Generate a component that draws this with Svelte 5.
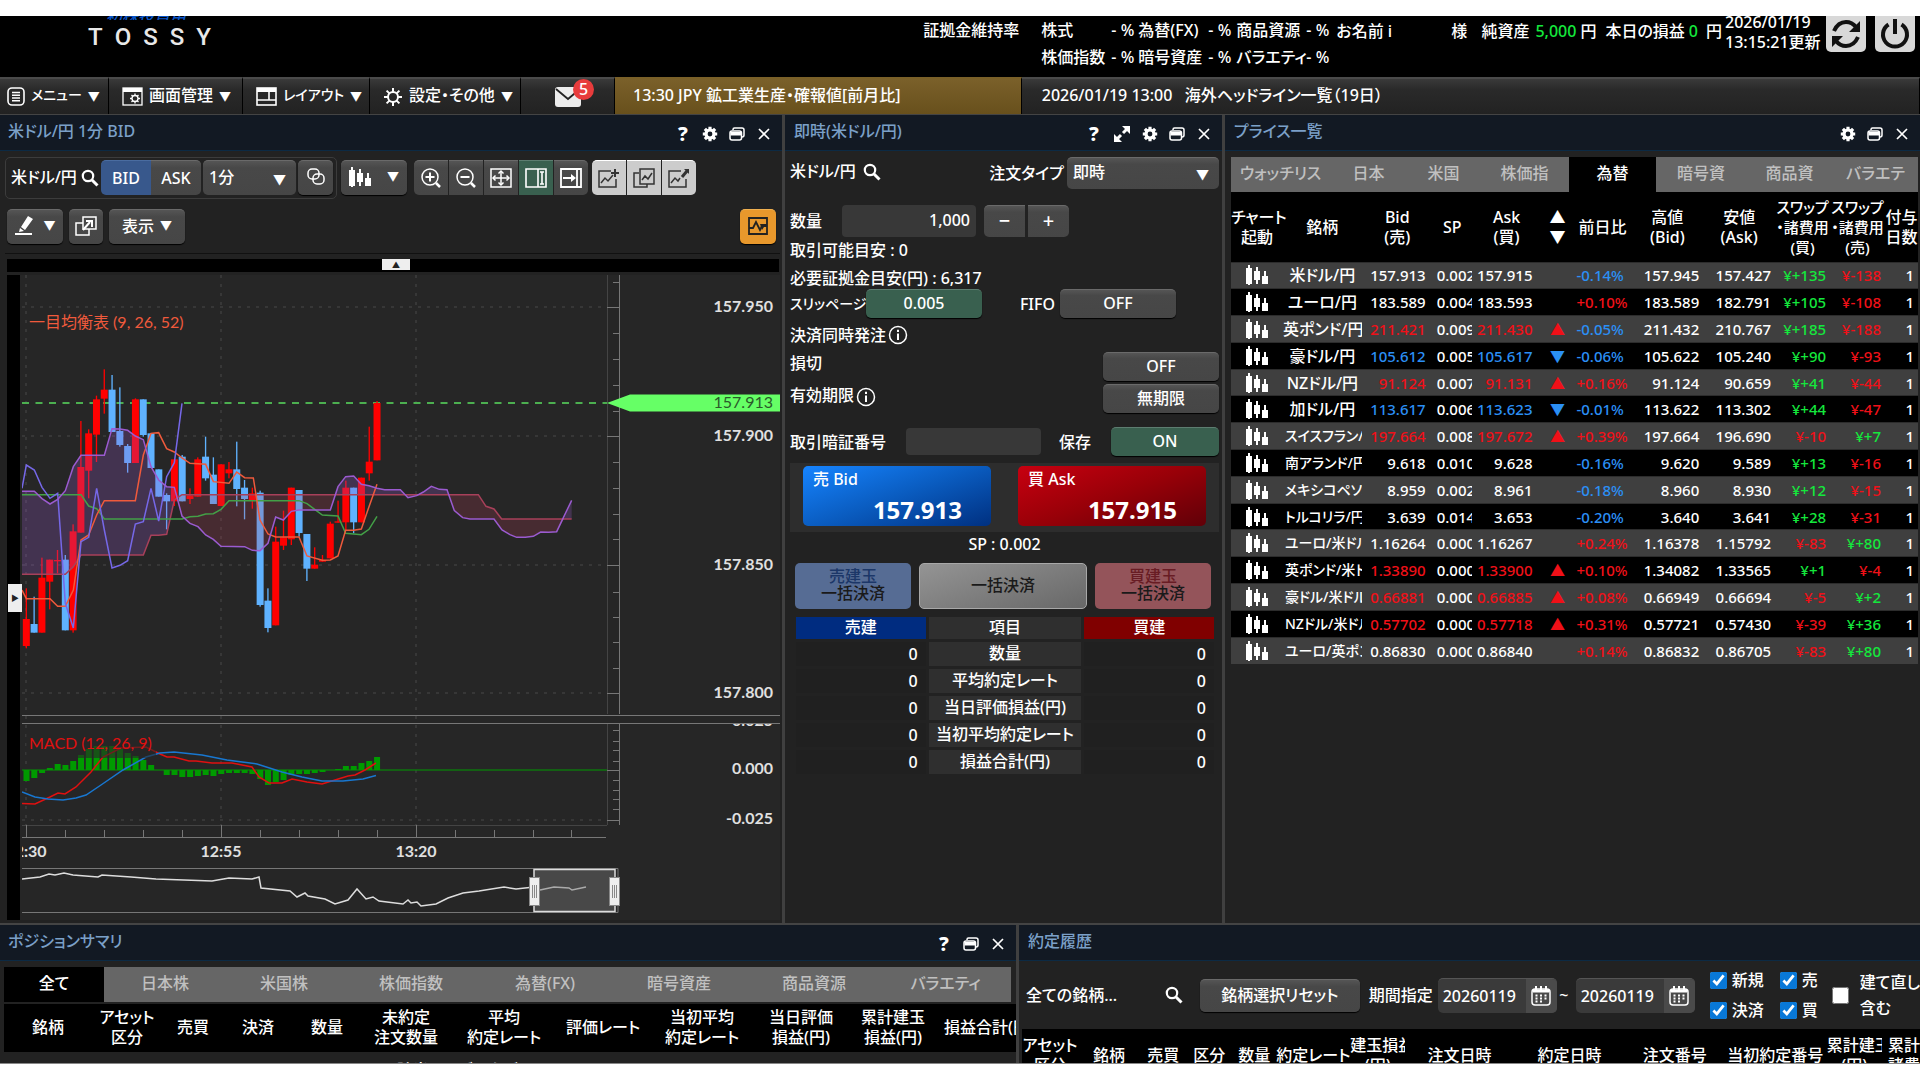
<script>
  const rates = [
    ['株式', '為替(FX)', '商品資源'],
    ['株価指数', '暗号資産', 'バラエティ']
  ];

  const menus = [
    { icon: 'list', label: 'メニュー', width: 109, kana: true },
    { icon: 'screen', label: '画面管理', width: 134 },
    { icon: 'layout', label: 'レイアウト', width: 127, kana: true },
    { icon: 'gearline', label: '設定・その他', width: 151 }
  ];

  const zoomTools = ['zoomin', 'zoomout', 'fit', 'axis', 'shift'];
  const chartTools = ['chartadd', 'chartcopy', 'chartedit'];

  // [color, high, open/close top, open/close bottom, low] in thirds of a pixel
  const candles = [
    ['r', 985, 1077, 1158, 1165], ['b', 1010, 1092, 1118, 1118], ['r', 893, 953, 1118, 1118],
    ['r', 899, 899, 965, 1048], ['r', 870, 900, 904, 940], ['b', 885, 899, 1111, 1111],
    ['r', 793, 814, 1111, 1118], ['r', 483, 621, 818, 818], ['r', 508, 520, 632, 715],
    ['r', 407, 418, 524, 606], ['r', 328, 389, 416, 461], ['b', 345, 389, 516, 516],
    ['b', 382, 513, 555, 560], ['b', 552, 558, 609, 638], ['r', 415, 418, 609, 609],
    ['b', 418, 418, 525, 530], ['b', 520, 520, 624, 624], ['b', 628, 628, 710, 710],
    ['b', 700, 705, 724, 808], ['r', 598, 598, 724, 738], ['b', 585, 590, 724, 724],
    ['r', 685, 706, 717, 732], ['r', 592, 598, 710, 710], ['b', 530, 590, 655, 662],
    ['b', 592, 644, 732, 732], ['r', 613, 613, 738, 738], ['r', 606, 628, 640, 655],
    ['b', 545, 628, 687, 739], ['b', 660, 683, 717, 778], ['r', 683, 700, 720, 746],
    ['b', 692, 698, 1035, 1040], ['b', 985, 1022, 1104, 1117], ['r', 800, 845, 1096, 1096],
    ['r', 752, 832, 857, 870], ['r', 683, 683, 838, 855], ['b', 690, 690, 819, 830],
    ['b', 822, 822, 926, 963], ['r', 862, 914, 926, 926], ['r', 885, 900, 905, 905],
    ['r', 785, 791, 895, 895], ['r', 722, 784, 788, 788], ['r', 662, 683, 787, 810],
    ['b', 683, 683, 787, 820], ['r', 653, 653, 787, 787], ['r', 500, 605, 640, 662],
    ['r', 423, 429, 601, 601]
  ];

  const spanA1 = '66,694 103,694 126,716 150,732 173,718 196,692 220,620 243,586 313,586 336,506 360,507 383,511 406,528 430,539 453,620 476,660 500,680 523,682';
  const spanA2 = '546,768 570,790 594,800 617,825 640,838 663,859 734,860 757,871 780,872 804,850 827,771 850,780 874,754 897,750 991,750';
  const spanA3 = '1014,680 1037,650 1061,648 1084,673 1107,677 1131,685 1154,689 1201,689 1224,713 1250,707 1270,696 1294,679 1318,688 1341,689';
  const spanA4 = '1363,752 1388,773 1410,777 1482,777 1506,810 1530,824 1550,832 1576,832 1600,829 1622,816 1646,817 1670,815';
  const spanA = [spanA1, spanA2, spanA3, spanA4, '1715,721'].join(' ');
  const spanB = '66,943 196,943 220,920 243,885 430,885 453,826 476,826 500,823 523,720 546,704 1435,704 1458,739 1482,747 1505,777 1715,777';
  const conversion = '66,990 79,1016 150,1016 173,1039 196,1039 220,990 243,840 266,825 290,765 313,722 406,722 430,585 453,520 476,518 500,566 523,576 546,594 570,610 617,613 640,665 687,670 710,636 734,653 760,654 780,780 804,822 827,831 897,831 921,888 967,901 991,900 1014,888 1037,811 1061,811 1084,807 1107,740 1131,673';
  const baseLine = '66,704 243,704 266,738 290,746 313,777 546,777 570,770 594,769 617,762 640,761 663,748 687,722 897,722 921,731 944,748 967,765 1014,768 1037,820 1084,824 1107,808 1131,769';
  const lagging = '66,685 79,615 103,630 126,682 150,715 173,700 196,1030 220,1104 243,845 266,832 290,685 313,810 336,924 360,916 383,902 406,792 430,785 453,685 476,783 500,650 523,608 546,430';

  const priceLabels = [
    ['157.950', 307], ['157.900', 436], ['157.850', 565], ['157.800', 693]
  ];
  const minorTicks = [282, 333, 359, 385, 411, 462, 488, 514, 539, 592, 617, 642, 668];
  const macdTicks = [730, 741, 750, 761, 780, 790, 799, 809];
  const timeTicks = [65, 104, 143, 182, 260, 299, 338, 377, 455, 494, 533, 571];

  // MACD histogram, pixels above (+) or below (-) zero
  const histogram = [
    -11, -8, -3, 2, 6, 5, 9, 15, 21, 24, 24, 24, 21, 17, 14, 10, 5, 0, -5, -5, -7, -7, -6,
    -5, -6, -4, -3, -3, -3, -4, -9, -15, -12, -10, -5, -4, -4, -3, -2, 0, 1, 4, 4, 7, 9, 13
  ];

  const summaryRows = ['数量', '平均約定レート', '当日評価損益(円)', '当初平均約定レート', '損益合計(円)'];

  const priceTabs = [
    ['ウォッチリス', 99], ['日本', 77], ['米国', 73], ['株価指', 89],
    ['為替', 87], ['暗号資', 90], ['商品資', 87], ['バラエテ', 85]
  ];
  const priceCols = [52, 79, 71, 39, 70, 32, 58, 72, 72, 55, 55, 33];
  const priceHeads = [
    'チャート\n起動', '銘柄', 'Bid\n(売)', 'SP', 'Ask\n(買)', '▲\n▼', '前日比',
    '高値\n(Bid)', '安値\n(Ask)', 'スワップ\n・諸費用\n(買)', 'スワップ\n・諸費用\n(売)', '付与\n日数'
  ];
  const prices = [
    ['米ドル/円', '157.913', '0.002', '157.915', '', '-0.14%', '157.945', '157.427', '+135', '-138'],
    ['ユーロ/円', '183.589', '0.004', '183.593', '', '+0.10%', '183.589', '182.791', '+105', '-108'],
    ['英ポンド/円', '211.421', '0.009', '211.430', 'up', '-0.05%', '211.432', '210.767', '+185', '-188'],
    ['豪ドル/円', '105.612', '0.005', '105.617', 'down', '-0.06%', '105.622', '105.240', '+90', '-93'],
    ['NZドル/円', '91.124', '0.007', '91.131', 'up', '+0.16%', '91.124', '90.659', '+41', '-44'],
    ['加ドル/円', '113.617', '0.006', '113.623', 'down', '-0.01%', '113.622', '113.302', '+44', '-47'],
    ['スイスフラン/円', '197.664', '0.008', '197.672', 'up', '+0.39%', '197.664', '196.690', '-10', '+7'],
    ['南アランド/円', '9.618', '0.010', '9.628', '', '-0.16%', '9.620', '9.589', '+13', '-16'],
    ['メキシコペソ/円', '8.959', '0.002', '8.961', '', '-0.18%', '8.960', '8.930', '+12', '-15'],
    ['トルコリラ/円', '3.639', '0.014', '3.653', '', '-0.20%', '3.640', '3.641', '+28', '-31'],
    ['ユーロ/米ドル', '1.16264', '0.00003', '1.16267', '', '+0.24%', '1.16378', '1.15792', '-83', '+80'],
    ['英ポンド/米ドル', '1.33890', '0.00010', '1.33900', 'up', '+0.10%', '1.34082', '1.33565', '+1', '-4'],
    ['豪ドル/米ドル', '0.66881', '0.00004', '0.66885', 'up', '+0.08%', '0.66949', '0.66694', '-5', '+2'],
    ['NZドル/米ドル', '0.57702', '0.00016', '0.57718', 'up', '+0.31%', '0.57721', '0.57430', '-39', '+36'],
    ['ユーロ/英ポンド', '0.86830', '0.00010', '0.86840', '', '+0.14%', '0.86832', '0.86705', '-83', '+80']
  ];

  const positionTabs = [
    ['全て', 100], ['日本株', 122], ['米国株', 116], ['株価指数', 138],
    ['為替(FX)', 130], ['暗号資産', 138], ['商品資源', 132], ['バラエティ', 131]
  ];
  const positionCols = [
    ['銘柄', 88], ['アセット\n区分', 70], ['売買', 62], ['決済', 68], ['数量', 70],
    ['未約定\n注文数量', 88], ['平均\n約定レート', 108], ['評価レート', 90],
    ['当初平均\n約定レート', 108], ['当日評価\n損益(円)', 90], ['累計建玉\n損益(円)', 94], ['損益合計(円)', 98]
  ];
  const historyCols = [
    ['アセット\n区分', 56], ['銘柄', 62], ['売買', 46], ['区分', 46], ['数量', 44],
    ['約定レート', 74], ['建玉損益\n(円)', 55], ['注文日時', 108], ['約定日時', 112],
    ['注文番号', 98], ['当初約定番号', 103], ['累計建玉\n(円)', 55], ['累計諸\n諸費用', 60]
  ];

  let side = $state('BID');
  let quantity = $state('1,000');
  let pin = $state('');
  let priceTab = $state('為替');
  let positionTab = $state('全て');
  let from = $state('20260119');
  let to = $state('20260119');

  const sign = (v) => (v.startsWith('+') ? 'gain' : 'loss');
  const pct = (v) => (v.startsWith('+') ? 'up' : 'down');
</script>

{#snippet icon(name)}
  {#if name === 'gear' || name === 'gearline'}
    <svg class="ic" width={name === 'gear' ? 16 : 20} height={name === 'gear' ? 16 : 20} viewBox="0 0 20 20" fill="none" stroke="currentColor">
      <circle cx="10" cy="10" r="5" stroke-width={name === 'gear' ? 4 : 2} />
      <path d="M10 1v4M10 15v4M1 10h4M15 10h4M3.6 3.6l2.8 2.8M13.6 13.6l2.8 2.8M3.6 16.4l2.8-2.8M13.6 6.4l2.8-2.8" stroke-width={name === 'gear' ? 4 : 2} />
    </svg>
  {:else if name === 'help'}
    <span class="q">?</span>
  {:else if name === 'window'}
    <svg class="ic" width="16" height="14" viewBox="0 0 16 14" fill="none" stroke="currentColor" stroke-width="1.5">
      <path d="M4 3V2.5Q4 1 5.5 1H13Q15 1 15 3V8Q15 10 13 10" />
      <rect x="1" y="4" width="11.5" height="9" rx="2" />
      <path d="M1.5 5h10.500v3.5H1.5z" fill="currentColor" stroke="none" />
    </svg>
  {:else if name === 'close'}
    <svg class="ic" width="14" height="14" viewBox="0 0 14 14" stroke="currentColor" stroke-width="1.7"><path d="M2 2l10 10M12 2L2 12" /></svg>
  {:else if name === 'expand'}
    <svg class="ic" width="18" height="18" viewBox="0 0 18 18" fill="currentColor" stroke="currentColor">
      <path d="M9 1h8v8zM1 9v8h8z" stroke="none" /><path d="M14 4l-4 4M4 14l4-4" stroke-width="3" />
    </svg>
  {:else if name === 'search'}
    <svg class="ic" width="18" height="18" viewBox="0 0 18 18" fill="none" stroke="currentColor"><circle cx="7" cy="7" r="5.2" stroke-width="2.2" /><path d="M11 11l5.5 5.5" stroke-width="3" /></svg>
  {:else if name === 'list'}
    <svg class="ic" width="18" height="19" viewBox="0 0 18 19" fill="none" stroke="currentColor" stroke-width="1.6"><rect x="1" y="1" width="16" height="17" rx="4" /><path d="M5 5.5h8M5 8.2h8M5 11h8M5 13.7h8" /></svg>
  {:else if name === 'screen'}
    <svg class="ic" width="21" height="19" viewBox="0 0 21 19" fill="none" stroke="currentColor" stroke-width="1.3"><rect x="1" y="1" width="19" height="17" /><path d="M1 3h19" stroke-width="4" /><circle cx="13" cy="11.5" r="3" /><path d="M13 6.5v2M13 14.5v2M8 11.5h2M16 11.5h2M9.5 8l1.5 1.5M15 13.5l1.5 1.5M9.5 15l1.5-1.5M15 9.5l1.5-1.5" /></svg>
  {:else if name === 'layout'}
    <svg class="ic" width="21" height="19" viewBox="0 0 21 19" fill="none" stroke="currentColor" stroke-width="1.6"><rect x="1" y="1" width="19" height="17" /><path d="M1 3h19" stroke-width="4" /><path d="M13 4v9M1 13h19" /></svg>
  {:else if name === 'mail'}
    <svg class="ic" width="26" height="20" viewBox="0 0 26 20"><rect width="26" height="20" rx="3" fill="#ececec" /><path d="M1 2l12 10L25 2" fill="none" stroke="#222" stroke-width="1.8" /></svg>
  {:else if name === 'refresh'}
    <svg class="ic" width="32" height="30" viewBox="0 0 32 30" fill="none" stroke="#111" stroke-width="4"><path d="M4 12Q8 3 16 3Q22 3 26 8M28 18Q24 27 16 27Q10 27 6 22" /><path d="M30 2v11H19zM2 28V17h11z" fill="#111" stroke="none" /></svg>
  {:else if name === 'power'}
    <svg class="ic" width="30" height="30" viewBox="0 0 30 30" fill="none" stroke="#111" stroke-width="4"><path d="M8.5 5.5a12 12 0 1 0 13 0M15 0v15" /></svg>
  {:else if name === 'link'}
    <svg class="ic" width="20" height="18" viewBox="0 0 20 18" fill="none" stroke="currentColor" stroke-width="1.5"><rect x="2" y="1" width="11" height="10" rx="4" /><rect x="7" y="6" width="11" height="10" rx="4" /></svg>
  {:else if name === 'candles'}
    <svg class="ic" width="22" height="20" viewBox="0 0 22 20" fill="currentColor"><path d="M0 3h6v16H0zM2 0h2v20H2zM8 6h6v9H8zM10 2h2v17h-2zM16 11h6v8h-6zM18 6h2v13h-2z" /></svg>
  {:else if name === 'zoomin' || name === 'zoomout'}
    <svg class="ic" width="22" height="20" viewBox="0 0 22 20" fill="none" stroke="currentColor" stroke-width="1.5"><circle cx="10" cy="9" r="8" /><path d="M16 15l4 4" stroke-width="2.5" /><path d={name === 'zoomin' ? 'M5.5 9h9M10 4.5v9' : 'M5.5 9h9'} stroke-width="2" /></svg>
  {:else if name === 'fit'}
    <svg class="ic" width="22" height="20" viewBox="0 0 22 20" fill="none" stroke="currentColor" stroke-width="1.5"><path d="M1 1h20v18H1zM11 3v14M3 10h16" /><path d="M8.5 5.5L11 3l2.5 2.5M8.5 14.5L11 17l2.5-2.5M5.5 7.5L3 10l2.5 2.5M16.5 7.5L19 10l-2.5 2.5" /></svg>
  {:else if name === 'axis'}
    <svg class="ic" width="22" height="20" viewBox="0 0 22 20" fill="none" stroke="currentColor" stroke-width="1.6"><path d="M1 1h20v18H1zM13 1v18M15 4h4M15 16h4M17 4v12" /></svg>
  {:else if name === 'shift'}
    <svg class="ic" width="22" height="20" viewBox="0 0 22 20" fill="none" stroke="currentColor" stroke-width="1.8"><path d="M1 1h20v18H1zM17 1v18M3 10h10" /><path d="M11 6l5 4-5 4z" fill="currentColor" stroke="none" /></svg>
  {:else if name === 'chartadd'}
    <svg class="ic" width="22" height="20" viewBox="0 0 22 20" fill="none" stroke="currentColor" stroke-width="1.5"><path d="M13 3H1v16h17v-8M3 15l4-5 3 3 5-6" /><path d="M17 1v8M13 5h8" stroke-width="2" /></svg>
  {:else if name === 'chartcopy'}
    <svg class="ic" width="22" height="20" viewBox="0 0 22 20" fill="none" stroke="currentColor" stroke-width="1.5"><path d="M6 5H1v14h13v-3M7 1h14v15H7zM9 12l3-4 3 3 4-6" /></svg>
  {:else if name === 'chartedit'}
    <svg class="ic" width="22" height="20" viewBox="0 0 22 20" fill="none" stroke="currentColor" stroke-width="1.5"><path d="M13 3H1v16h17v-8M3 15l4-5 3 3 2-3" /><path d="M14 9l5-6" stroke-width="3" /><path d="M16 1h5v5z" fill="currentColor" stroke="none" /></svg>
  {:else if name === 'pencil'}
    <svg class="ic" width="20" height="19" viewBox="0 0 20 19" fill="currentColor"><path d="M14 0l5 3-8 11-4-3zM6 12l4 3-5 1zM1 17h17v2H1z" /></svg>
  {:else if name === 'popout'}
    <svg class="ic" width="22" height="20" viewBox="0 0 22 20" fill="none" stroke="currentColor" stroke-width="1.5"><path d="M8 1h13v12H8zM8 7H1v12h13v-6" /><path d="M8 14l7-8M11 5h6v6" stroke-width="2" /></svg>
  {:else if name === 'trend'}
    <svg class="ic" width="20" height="18" viewBox="0 0 20 18" fill="none" stroke="#222" stroke-width="1.8"><path d="M1 1h18v16H1zM1 11h4l3-6 4 8 2-4" /><path d="M12 7h7v3h-3l-2 3z" fill="#222" stroke="none" /></svg>
  {:else if name === 'info'}
    <svg class="ic" width="20" height="20" viewBox="0 0 20 20" fill="none" stroke="currentColor"><circle cx="10" cy="10" r="8.5" stroke-width="1.5" /><path d="M10 8.5v6.5M10 4.8v2.2" stroke-width="2" /></svg>
  {:else if name === 'calendar'}
    <svg class="ic" width="20" height="20" viewBox="0 0 20 20" fill="none" stroke="currentColor" stroke-width="1.5"><rect x="1" y="3" width="18" height="16" rx="3" /><path d="M2 5h16" stroke-width="3" /><path d="M5 0v4M10 0v4M15 0v4" stroke-width="2" /><path d="M4.5 9.5h11M4.5 12.5h11M4.5 15.5h9" stroke-width="2" stroke-dasharray="2 2.5" /></svg>
  {/if}
{/snippet}

{#snippet panelHead(title, icons)}
  <header class="panel-head">
    <h2>{title}</h2>
    <div class="panel-icons">
      {#each icons as name}
        <button type="button" aria-label={name}>{@render icon(name)}</button>
      {/each}
    </div>
  </header>
{/snippet}

<div class="app" lang="ja">
  <header class="top">
    <div class="logo">
      <span class="tag">初株投資用</span>
      <div class="brand">
        {#each 'TOSSY' as letter}<span>{letter}</span>{/each}
      </div>
    </div>
    <div class="account">
      <span class="margin-label">証拠金維持率</span>
      <div class="rates">
        {#each rates as row}
          {#each row as name}
            <span>{name}</span><span>- %</span>
          {/each}
        {/each}
      </div>
      <div class="stats">
        <span class="name">お名前 i</span>
        <span class="sama">様</span>
        <span class="net">純資産</span>
        <b class="gain">5,000</b>
        <span class="yen">円</span>
        <span>本日の損益</span>
        <b class="gain">0</b>
        <span class="yen2">円</span>
      </div>
      <div class="clock">2026/01/19<br />13:15:21更新</div>
      <div class="sys">
        <button type="button" aria-label="更新">{@render icon('refresh')}</button>
        <button type="button" aria-label="ログアウト">{@render icon('power')}</button>
      </div>
    </div>
  </header>

  <nav class="menu">
    {#each menus as m}
      <button type="button" style="width: {m.width}px">{@render icon(m.icon)}<span class:kana={m.kana}>{m.label}</span><i>▼</i></button>
    {/each}
    <button type="button" class="mail" aria-label="メール">{@render icon('mail')}<em>5</em></button>
    <a href="#news" class="news gold">13:30 JPY 鉱工業生産・確報値[前月比]</a>
    <a href="#headline" class="news">2026/01/19 13:00&nbsp;&nbsp; 海外ヘッドライン一覧（19日）</a>
  </nav>

  <main class="upper">
    <section class="panel">
      {@render panelHead('米ドル/円 1分 BID', ['help', 'gear', 'window', 'close'])}
      <div class="chart-wrap">
        <div class="tools">
          <div class="symbol">
            <span class="pair">米ドル/円</span>
            <button type="button" class="bare" aria-label="銘柄検索">{@render icon('search')}</button>
            <div class="seg sides">
              {#each ['BID', 'ASK'] as s}
                <button type="button" class:blue={side === s} onclick={() => (side = s)}>{s}</button>
              {/each}
            </div>
            <span class="pick foot"><select aria-label="足種"><option>1分</option></select></span>
            <button type="button" class="btn link" aria-label="連動">{@render icon('link')}</button>
          </div>
          <button type="button" class="btn style" aria-label="チャート種類">{@render icon('candles')}<i>▼</i></button>
          <div class="seg">
            {#each zoomTools as t}
              <button type="button" class:green={t === 'axis'} aria-label={t}>{@render icon(t)}</button>
            {/each}
          </div>
          <div class="seg light">
            {#each chartTools as t}
              <button type="button" aria-label={t}>{@render icon(t)}</button>
            {/each}
          </div>
        </div>
        <div class="tools second">
          <button type="button" class="btn draw" aria-label="描画">{@render icon('pencil')}<i>▼</i></button>
          <button type="button" class="btn pop" aria-label="別窓">{@render icon('popout')}</button>
          <button type="button" class="btn show">表示<i>▼</i></button>
          <button type="button" class="btn orange" aria-label="テクニカル">{@render icon('trend')}</button>
        </div>
        <div class="fold"><button type="button" aria-label="折りたたむ">▲</button></div>
        <div class="chart">
          <div class="side-bar"><button type="button" aria-label="開く">▶</button></div>
          <svg viewBox="22 275 758 645">
            <g class="grid">
              <path d="M22 307h585M22 436h585M22 565h585M22 693h585M22 820h585M26 275v550M221 275v550M416 275v550" />
            </g>
            <path d="M22 403h585" stroke="#4caf50" stroke-width="1.8" stroke-dasharray="7 6.5" />
            <g transform="translate(0 260)">
              <g transform="scale(.33333)">
                {#each candles as [kind, high, top, bottom, low], i}
                  <g fill={kind === 'r' ? '#ff0000' : '#5fb2ff'}>
                    <rect x={77 + i * 23.38} y={high} width="4" height={low - high} />
                    <rect x={68.5 + i * 23.38} y={top} width="21" height={bottom - top} />
                  </g>
                {/each}
                <g fill="#9b5bd0" fill-opacity=".25">
                  <polygon points="{spanA1} 528,700 523,720 500,823 476,826 453,826 430,885 243,885 220,920 196,943 66,943" />
                  <polygon points="1006,704 {spanA3} 1346,704" />
                  <polygon points="1692,777 1715,721 1715,777" />
                </g>
                <g fill="#c0405a" fill-opacity=".22">
                  <polygon points="528,704 {spanA2} 1006,704" />
                  <polygon points="1346,704 {spanA4} 1692,777 1505,777 1482,747 1458,739 1435,704" />
                </g>
                <g fill="none" stroke-width="4.5">
                  <polyline points={spanB} stroke="#a8405a" />
                  <polyline points={baseLine} stroke="#43a047" />
                  <polyline points={conversion} stroke="#f05a3c" />
                  <polyline points={lagging} stroke="#7668e8" />
                  <polyline points={spanA} stroke="#9b5bd0" />
                </g>
              </g>
            </g>
            <text x="29" y="328" fill="#f05a3c">一目均衡表 (9, 26, 52)</text>

            <g fill="none" stroke="#777">
              <path d="M607.5 275v439M607.5 724v101M22 825.5h585" stroke="#444" />
              <path d="M619.5 275v439M619.5 724v101" />
              {#each priceLabels as [, y]}<path d="M607 {y}.5h13" />{/each}
              {#each minorTicks as y}<path d="M613 {y}.5h7" />{/each}
              {#each macdTicks as y}<path d="M613 {y}.5h7" />{/each}
              <path d="M607 770.5h13M607 820.5h13M22 715.5h758M22 723.5h758M22 837.5h584M26.5 825v12M221.5 825v12M416.5 825v12" />
              {#each timeTicks as x}<path d="M{x}.5 830v7" />{/each}
            </g>
            <g class="scale">
              {#each priceLabels as [label, y]}<text x="773" y={y + 5}>{label}</text>{/each}
              <text x="773" y="774">0.000</text>
              <text x="773" y="824">-0.025</text>
            </g>
            <svg x="22" y="724" width="758" height="4" viewBox="22 724 758 4"><text class="cut" x="773" y="726">0.025</text></svg>
            <polygon points="607,403 630,394.5 780,394.5 780,411.5 630,411.5" fill="#66ff66" />
            <text x="773" y="408" text-anchor="end" fill="#2a5a2a">157.913</text>

            {#each histogram as h, i}
              <rect x={23.5 + i * 7.79} y={h > 0 ? 770 - h : 770} width="6" height={Math.abs(h)} fill="#009a00" />
            {/each}
            <path d="M22 770h585" stroke="#009a00" />
            <polyline points="22,803.5 35,804 50,797 58,793 65,794 76,787 91,772 103,757 121,748 146,747 160,754 167,757 174,757 189,761 196,761 212,763 232,763 252,767 259,777 269,783 282,783 292,779 307,782 322,784 335,780 348,776 355,775 365,770 376,763" fill="none" stroke="#e01010" stroke-width="1.5" />
            <polyline points="22,792 35,797 48,799 63,800 76,798 86,795 101,785 123,770 146,757 160,753 174,752 202,755 227,760 257,764 282,772 302,777 322,781 343,781 363,779 376,775.5" fill="none" stroke="#1877d0" stroke-width="1.5" />
            <rect x="26" y="733" width="130" height="25" fill="#262626" fill-opacity=".6" />
            <text x="29" y="749" fill="#e01010">MACD (12, 26, 9)</text>

            <g class="time">
              <text x="26" y="857">12:30</text>
              <text x="221" y="857">12:55</text>
              <text x="416" y="857">13:20</text>
            </g>
            <path d="M22 868.5h596v44H22" fill="none" stroke="#777" />
            <rect x="534" y="869.5" width="81" height="42" fill="#484848" stroke="#ddd" stroke-width="1.5" />
            <polyline points="22,879 40,877 49,874 55,875 64,873 73,875 98,877 102,875 131,877 156,879 212,881 229,878 252,879 259,877 261,888 290,891 297,897 305,893 308,896 325,899 335,904 348,900 357,889 366,899 373,897 379,901 403,904 408,900 411,903 417,902 421,906 436,904 448,898 463,893 479,891 504,887 516,889 534,887" fill="none" stroke="#ddd" stroke-width="1.5" />
            <polyline points="540,890 554,887 569,888 572,890 586,887" fill="none" stroke="#aaa" stroke-width="1.5" />
            <g fill="#eee" stroke="#888">
              <rect x="529.5" y="877.5" width="10" height="28" /><rect x="609.5" y="877.5" width="10" height="28" />
              <path d="M532.5 885v13M534.5 885v13M536.5 885v13M612.5 885v13M614.5 885v13M616.5 885v13" />
            </g>
          </svg>
        </div>
      </div>
    </section>

    <section class="panel">
      {@render panelHead('即時(米ドル/円)', ['help', 'expand', 'gear', 'window', 'close'])}
      <form class="order" onsubmit={(e) => e.preventDefault()}>
        <div class="line first">
          <span>米ドル/円</span>
          <button type="button" class="bare" aria-label="銘柄検索">{@render icon('search')}</button>
          <label class="push" for="order-type">注文タイプ</label>
          <span class="pick type"><select id="order-type"><option>即時</option></select></span>
        </div>
        <div class="line qty">
          <label for="qty">数量</label>
          <input id="qty" bind:value={quantity} />
          <div class="seg step"><button type="button">−</button><button type="button">+</button></div>
        </div>
        <p>取引可能目安 : 0</p>
        <p>必要証拠金目安(円) : 6,317</p>
        <div class="line slip">
          <span class="kana">スリッページ</span>
          <button type="button" class="btn opt green">0.005</button>
          <span class="fifo">FIFO</span>
          <button type="button" class="btn opt">OFF</button>
        </div>
        <p class="same">決済同時発注{@render icon('info')}</p>
        <div class="line stop"><span>損切</span><button type="button" class="btn opt push">OFF</button></div>
        <div class="line limit"><span>有効期限</span>{@render icon('info')}<button type="button" class="btn opt push">無期限</button></div>
        <div class="line pin">
          <label for="pin">取引暗証番号</label>
          <input id="pin" type="password" bind:value={pin} />
          <span>保存</span>
          <button type="button" class="btn opt green push">ON</button>
        </div>
        <div class="quote">
          <button type="button" class="bid"><span>売 Bid</span><strong>157.913</strong></button>
          <button type="button" class="ask"><span>買 Ask</span><strong>157.915</strong></button>
        </div>
        <p class="sp">SP : 0.002</p>
        <div class="closeall">
          <button type="button" class="c-sell" disabled><span>売建玉</span>一括決済</button>
          <button type="button" class="c-all" disabled>一括決済</button>
          <button type="button" class="c-buy" disabled><span>買建玉</span>一括決済</button>
        </div>
        <table class="sum">
          <thead><tr><th>売建</th><th>項目</th><th>買建</th></tr></thead>
          <tbody>
            {#each summaryRows as label}
              <tr><td>0</td><th>{label}</th><td>0</td></tr>
            {/each}
          </tbody>
        </table>
      </form>
    </section>

    <section class="panel">
      {@render panelHead('プライス一覧', ['gear', 'window', 'close'])}
      <div class="prices">
        <div class="tabs">
          {#each priceTabs as [label, grow]}
            <button type="button" class:on={priceTab === label} style="flex-grow: {grow}" onclick={() => (priceTab = label)}>{label}</button>
          {/each}
        </div>
        <table class="list">
          <colgroup>{#each priceCols as w}<col style="width: {w / 6.88}%" />{/each}</colgroup>
          <thead>
            <tr>{#each priceHeads as h}<th>{h}</th>{/each}</tr>
          </thead>
          <tbody>
            {#each prices as [name, bid, sp, ask, dir, change, high, low, buy, sell]}
              <tr>
                <td class="mid"><button type="button" class="bare" aria-label="チャート起動">{@render icon('candles')}</button></td>
                <td class="nm" class:long={name.length > 6}>{name}</td>
                <td class={dir}>{bid}</td>
                <td class="clip">{sp}</td>
                <td class={dir}>{ask}</td>
                <td class="mid {dir}">{dir === 'up' ? '▲' : dir === 'down' ? '▼' : ''}</td>
                <td class="pct {pct(change)}">{change}</td>
                <td>{high}</td>
                <td>{low}</td>
                <td class={sign(buy)}>¥{buy}</td>
                <td class={sign(sell)}>¥{sell}</td>
                <td>1</td>
              </tr>
            {/each}
          </tbody>
        </table>
      </div>
    </section>
  </main>

  <div class="lower">
    <section class="panel">
      {@render panelHead('ポジションサマリ', ['help', 'window', 'close'])}
      <div class="positions">
        <div class="tabs">
          {#each positionTabs as [label, grow]}
            <button type="button" class:on={positionTab === label} style="flex-grow: {grow}" onclick={() => (positionTab = label)}>{label}</button>
          {/each}
        </div>
        <table class="heads">
          <colgroup>{#each positionCols as [, w]}<col style="width: {w}px" />{/each}</colgroup>
          <thead><tr>{#each positionCols as [label]}<th>{label}</th>{/each}</tr></thead>
        </table>
        <p class="empty">該当するデータがありません</p>
      </div>
    </section>

    <section class="panel">
      {@render panelHead('約定履歴', [])}
      <div class="history">
        <div class="filter">
          <span class="all">全ての銘柄...</span>
          <button type="button" class="bare" aria-label="銘柄検索">{@render icon('search')}</button>
          <button type="button" class="btn reset">銘柄選択リセット</button>
          <label for="from">期間指定</label>
          <div class="date"><input id="from" bind:value={from} /><button type="button" aria-label="開始日">{@render icon('calendar')}</button></div>
          <span class="tilde">~</span>
          <div class="date"><input aria-label="終了日" bind:value={to} /><button type="button" aria-label="終了日を選択">{@render icon('calendar')}</button></div>
          <div class="checks">
            <label><input type="checkbox" checked />新規</label>
            <label><input type="checkbox" checked />売</label>
            <label><input type="checkbox" checked />決済</label>
            <label><input type="checkbox" checked />買</label>
          </div>
          <label class="rebuild"><input type="checkbox" /><span>建て直し<br />含む</span></label>
        </div>
        <table class="heads hist">
          <colgroup>{#each historyCols as [, w]}<col style="width: {w}px" />{/each}</colgroup>
          <thead><tr>{#each historyCols as [label]}<th>{label}</th>{/each}</tr></thead>
        </table>
      </div>
    </section>
  </div>
</div>

<style>
  :global(body) { background: #fff; }
  .app {
    box-sizing: border-box;
    height: calc(100vh - 32px);
    margin: 16px 0;
    overflow: hidden;
    display: flex;
    flex-direction: column;
    background: #222;
    border-bottom: 1px solid #888;
    color: #fff;
    font: 500 16px/20px 'Noto Sans', 'Noto Sans CJK JP', sans-serif;
    font-feature-settings: 'palt';
    white-space: nowrap;
  }
  .app * { box-sizing: border-box; }
  button, input, select { font: inherit; font-feature-settings: inherit; color: inherit; border: 0; padding: 0; margin: 0; white-space: nowrap; }
  button { background: none; cursor: pointer; }
  p, h2 { margin: 0; }
  i, em { font-style: normal; }
  i { font-size: 12px; }
  .ic { display: block; flex: none; }
  .kana { font-size: 14px; }
  .gain { color: #14e83c; }
  .loss { color: #f01018; }
  .up { color: #f01018; }
  .down { color: #2b8ff5; }
  .bare { display: flex; align-items: center; }

  /* header */
  .top { display: flex; justify-content: space-between; height: 61px; flex: none; background: #000; padding: 0 5px 0 88px; overflow: hidden; }
  .logo { width: 123px; }
  .tag { display: block; height: 4px; padding-left: 18px; color: #0a55c8; font-style: italic; line-height: 0; overflow: hidden; }
  .brand { display: flex; justify-content: space-between; padding-top: 3px; font: 500 24px/28px 'Roboto', sans-serif; color: #e8e8e8; }
  .account { display: flex; }
  .margin-label { padding: 4px 22px 0 0; }
  .rates { display: grid; grid-template-columns: 70px 27px 70px 28px 70px 30px; grid-auto-rows: 27px; padding-top: 4px; }
  .stats { display: flex; gap: 4px; padding-top: 5px; }
  .stats b { font-weight: 500; }
  .name { width: 111px; }
  .sama { margin-right: 10px; }
  .net { margin-right: 2px; }
  .yen { margin-right: 5px; }
  .yen2 { margin: 0 3px 0 4px; }
  .clock { width: 101px; margin-top: -4px; }
  .sys { display: flex; gap: 9px; }
  .sys button { width: 40px; height: 36px; display: grid; place-items: center; background: #d8d8d8; border-radius: 0 0 5px 5px; }

  .menu { display: flex; height: 38px; flex: none; border-bottom: 1px solid #444; background: #111; }
  .menu button, .news { display: flex; align-items: center; background: linear-gradient(#3a3a3a, #2a2a2a 30%, #222); border-top: 2px solid #4a4a4a; border-right: 1px solid #000; }
  .menu button { padding-left: 13px; gap: 6px; flex: none; }
  .menu button:first-child { padding-left: 7px; }
  .menu span, .news { padding-bottom: 4px; }
  .menu .mail { width: 94px; justify-content: center; padding: 0; position: relative; }
  .mail em { position: absolute; top: 0; right: 20px; width: 21px; height: 21px; border-radius: 50%; background: #e83c3c; }
  .news { flex: 905; min-width: 0; padding-left: 20px; color: #fff; text-decoration: none; }
  .news.gold { flex: 400; padding-left: 18px; background: linear-gradient(#7a602a, #68501c); border-top-color: #7a6028; }

  /* panels */
  .upper { display: grid; grid-template-columns: 785fr 440fr 695fr; flex: none; }
  .lower { display: grid; grid-template-columns: 1019fr 901fr; flex: 1; min-height: 0; border-top: 2px solid #444; }
  .panel { min-width: 0; overflow: hidden; border-right: 3px solid #404040; }
  .panel:last-child { border-right: 0; }
  .panel-head { display: flex; justify-content: space-between; align-items: center; height: 36px; background: #121923; border-bottom: 1px solid #0c2a44; padding: 0 10px 0 8px; }
  .panel + .panel .panel-head { padding-left: 9px; }
  .panel-head h2 { font: inherit; color: #7ba0c8; margin-top: -4px; }
  .panel-icons { display: flex; gap: 11px; align-items: center; padding-top: 3px; }
  .panel-icons button { min-width: 16px; display: grid; place-items: center; }
  .q { font-weight: 800; font-size: 20px; }

  .btn, .seg button, .pick select { background: linear-gradient(#555, #484848 20%, #464646); border-top: 1px solid #6a6a6a; border-radius: 5px; }
  .btn { display: flex; align-items: center; justify-content: center; gap: 9px; box-shadow: 0 1px 1px #000; padding-bottom: 2px; }
  .green, .seg button.green { background: #39604f; border-top-color: #5d7d70; }
  .seg button.blue { background: #38588c; border-top-color: #4a6ca0; }
  .seg { display: flex; height: 35px; gap: 1px; }
  .seg button { width: 34px; display: grid; place-items: center; border-radius: 0; padding-bottom: 1px; }
  .seg button:first-child { border-radius: 5px 0 0 5px; }
  .seg button:last-child { border-radius: 0 5px 5px 0; }
  .light button { background: #ccc; color: #333; border-top-color: #fff; }
  .pick { position: relative; display: block; }
  .pick select { appearance: none; width: 100%; height: 100%; padding: 0 0 3px 6px; }
  .pick::after { content: '▼'; position: absolute; right: 10px; top: 50%; margin-top: -9px; font-size: 13px; line-height: 20px; pointer-events: none; }

  .chart-wrap { padding: 5px 2px 3px 5px; }
  .tools { display: flex; align-items: center; gap: 4px; height: 43px; }
  .symbol { display: flex; align-items: center; height: 42px; width: 332px; border: 1px solid #3c3c3c; border-radius: 5px; padding-left: 5px; }
  .pair { flex: 1; padding-bottom: 2px; }
  .sides { margin: 0 2px; gap: 0; }
  .sides button { width: 50px; }
  .foot { width: 93px; height: 35px; margin-right: 2px; }
  .link { width: 35px; height: 35px; margin-right: 3px; }
  .style { width: 66px; height: 35px; margin-right: 3px; gap: 16px; }
  .second { padding-left: 2px; height: 55px; gap: 6px; border-bottom: 1px solid #111; }
  .second .btn { height: 35px; }
  .draw { width: 56px; }
  .pop { width: 34px; }
  .show { width: 76px; gap: 6px; }
  .second .orange { width: 36px; margin: 0 4px 0 auto; background: #e8982c; border-top-color: #f0b050; }
  .fold { display: flex; justify-content: center; margin: 5px 1px 3px 2px; height: 13px; background: #000; }
  .fold button { width: 28px; height: 11px; margin-right: -6px; background: #eee; color: #222; font-size: 8px; line-height: 11px; }
  .chart { display: flex; margin-left: 2px; background: #262626; }
  .chart > svg { display: block; flex: 1; min-width: 0; }
  .side-bar { width: 13px; margin-right: 2px; background: #000; display: flex; align-items: center; }
  .side-bar button { width: 14px; height: 28px; flex: none; position: relative; left: 1px; background: #eee; color: #222; font-size: 8px; }
  .chart text { font: 16px 'Lato', 'Noto Sans CJK JP', sans-serif; }
  .grid path { fill: none; stroke: #484848; stroke-dasharray: 3 6; }
  .chart .scale text, .chart text.cut { fill: #e0e0e0; font-weight: 700; text-anchor: end; }
  .chart .time text { fill: #e0e0e0; font-weight: 700; text-anchor: middle; }

  /* order form */
  .order { padding: 6px 3px 0 5px; }
  .order .line { display: flex; align-items: center; }
  .push { margin-left: auto; }
  .first { height: 32px; }
  .first > span:first-child { padding-bottom: 5px; }
  .first .bare { margin-left: 7px; padding-bottom: 3px; }
  .type { width: 152px; height: 32px; margin-left: 3px; }
  .qty { height: 32px; margin: 16px 0 0; }
  .qty label { width: 52px; }
  .order input { background: #383838; border-radius: 4px; }
  .qty input { width: 134px; height: 32px; padding: 0 6px 2px 0; text-align: right; }
  .step { margin-left: 8px; height: 32px; gap: 3px; }
  .step button { width: 41px; font-size: 20px; }
  .order p { height: 28px; line-height: 26px; }
  .opt { width: 116px; height: 29px; }
  .slip { height: 29px; margin-top: -4px; }
  .slip > span:first-child { width: 76px; }
  .fifo { width: 78px; text-align: right; padding-right: 5px; }
  .order .same { display: flex; align-items: center; height: 34px; gap: 2px; }
  .order .stop, .order .limit { height: 32px; gap: 2px; align-items: flex-start; line-height: 22px; }
  .limit > .ic, .limit > :global(svg) { margin-top: 3px; }
  .pin { height: 29px; margin: 11px 0 7px; }
  .pin label { width: 116px; }
  .pin input { width: 135px; height: 27px; margin-right: 18px; }
  .pin .opt { width: 108px; }
  .quote { display: flex; justify-content: space-between; height: 69px; padding: 3px 13px 6px; background: #2d2d2d; }
  .quote button { width: 188px; height: 60px; border-radius: 5px; text-align: left; padding: 0 29px 1px 10px; display: flex; flex-direction: column; justify-content: space-between; }
  .quote span { padding-top: 3px; }
  .quote strong { align-self: flex-end; font-size: 24px; line-height: 30px; }
  .bid { background: linear-gradient(160deg, #1684ff, #0a5cc0 50%, #003080); }
  .ask { background: linear-gradient(160deg, #c80010, #980008 50%, #600008); }
  .order .sp { height: 31px; line-height: 24px; text-align: center; }
  .closeall { display: flex; justify-content: space-between; height: 46px; margin: 0 8px 5px 5px; }
  .closeall button { width: 116px; border-radius: 5px; color: #1a1a1a; line-height: 17px; padding-bottom: 2px; cursor: default; }
  .closeall span { display: block; }
  .closeall .c-all { width: 168px; background: linear-gradient(160deg, #949494, #686868); border: 1px solid #a8a8a8; }
  .closeall .c-sell { background: #566c94; }
  .c-sell span { color: #1c3768; }
  .closeall .c-buy { background: #94545a; }
  .c-buy span { color: #681c24; }
  .sum { width: calc(100% - 5px); margin-left: 3px; border-spacing: 3px; table-layout: fixed; }
  .sum th { background: #2f2f2f; font-weight: 500; height: 24px; padding: 0 0 3px; line-height: 20px; }
  .sum td { background: #202020; text-align: right; padding: 0 8px 0 0; }
  .sum thead th { height: 22px; padding-bottom: 2px; width: 129px; }
  .sum thead th:nth-child(2) { width: 152px; }
  .sum thead th:first-child { background: #002c80; }
  .sum thead th:last-child { background: #800000; }

  /* tables */
  .tabs { display: flex; height: 35px; }
  .tabs button { flex: 1 1 0; min-width: 0; overflow: hidden; background: #666; color: #c0c0c0; padding-bottom: 4px; }
  .tabs button.on { background: #000; color: #fff; }
  .prices { padding: 6px 2px 0 6px; }
  .list { width: 100%; border-collapse: collapse; table-layout: fixed; height: 472px; }
  .list th { height: 70px; padding: 0; background: #000; font-weight: 500; white-space: pre; line-height: 20px; }
  .list th:nth-child(10), .list th:nth-child(11) { font-size: 15px; }
  .list td { height: 26px; padding: 0 4px 0 0; text-align: right; overflow: hidden; border-top: 1px solid #2c2c2c; font-size: 15px; }
  .list tbody tr { background: #000; }
  .list tbody tr:nth-child(odd) { background: #3f3f3f; }
  .list td.mid { text-align: center; padding: 0; }
  .list td.mid .bare { margin: 0 auto; }
  .list td.nm { text-align: center; padding: 0; font-size: 16px; }
  .list td.long { text-align: left; padding-left: 2px; font-size: 14px; }
  .list td:nth-child(3) { padding-right: 7px; }
  .list td:nth-child(5) { padding-right: 9px; }
  .list td.clip { text-align: left; padding: 0 0 0 4px; }
  .list td.pct { text-align: left; padding: 0 0 0 3px; }

  .positions { padding: 6px 4px 0; }
  .positions .tabs { margin-right: 1px; }
  .heads { border-collapse: collapse; table-layout: fixed; width: 1034px; margin-top: 2px; background: #000; }
  .heads th { height: 48px; padding: 0 0 2px; overflow: hidden; font-weight: 500; white-space: pre; }
  .empty { width: 980px; text-align: center; padding-top: 8px; }
  .history { padding: 0 0 0 3px; }
  .filter { display: flex; align-items: center; height: 68px; padding-left: 4px; }
  .all { width: 140px; }
  .reset { width: 161px; height: 33px; margin: 0 9px 0 17px; }
  .date { display: flex; width: 120px; height: 35px; margin-left: 5px; border-radius: 5px; overflow: hidden; background: #3a3a3a; border-top: 1px solid #555; }
  .date input { width: 88px; background: none; padding-left: 5px; }
  .date button { flex: 1; display: grid; place-items: center; background: #4a4a4a; }
  .tilde { width: 14px; text-align: center; }
  .checks { display: grid; grid-template-columns: 70px auto; grid-auto-rows: 30px; align-items: center; margin-left: 15px; }
  .checks label { display: flex; align-items: center; gap: 5px; }
  .filter input[type='checkbox'] { width: 17px; height: 17px; flex: none; accent-color: #0878d8; }
  .rebuild { display: flex; align-items: center; gap: 11px; margin-left: 14px; line-height: 26px; }
  .hist { width: 920px; margin: 0; }
  .hist th { height: 54px; }
</style>
